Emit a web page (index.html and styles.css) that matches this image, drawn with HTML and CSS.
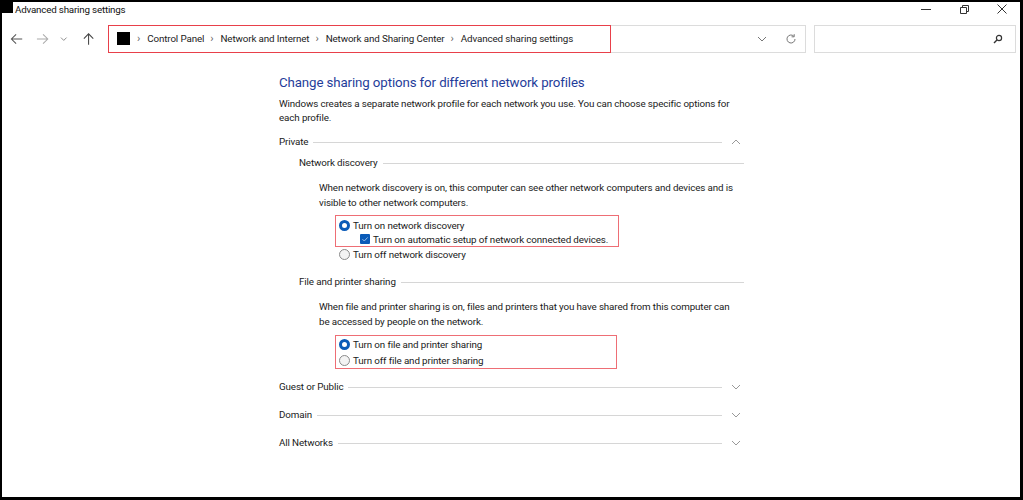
FILE: index.html
```html
<!DOCTYPE html>
<html lang="en">
<head>
<meta charset="utf-8">
<title>Advanced sharing settings</title>
<link rel="stylesheet" href="styles.css">
</head>
<body>
<div class="window">
  <header class="titlebar">
    <span class="app-icon"></span>
    <span class="title">Advanced sharing settings</span>
    <div class="controls">
      <svg class="ctl" viewBox="0 0 10 10" width="10" height="10"><path d="M0 5.5h10" stroke="#333" stroke-width="1"/></svg>
      <svg class="ctl" viewBox="0 0 10 10" width="10" height="10"><path d="M1.5 3.5h6v6h-6z M3.5 3.5v-2h6v6h-2" fill="none" stroke="#333" stroke-width="1"/></svg>
      <svg class="ctl" viewBox="0 0 10 10" width="10" height="10"><path d="M0.5 0.5l9 9M9.5 0.5l-9 9" stroke="#333" stroke-width="1"/></svg>
    </div>
  </header>

  <nav class="navbar">
    <div class="nav-buttons">
      <svg class="nav-btn" viewBox="0 0 14 14" width="14" height="14"><path d="M13 7H1.5M6.5 2L1.5 7l5 5" fill="none" stroke="#555" stroke-width="1.1"/></svg>
      <svg class="nav-btn dim" viewBox="0 0 14 14" width="14" height="14"><path d="M1 7h11.5M7.5 2l5 5-5 5" fill="none" stroke="#aaa" stroke-width="1.1"/></svg>
      <svg class="nav-drop" viewBox="0 0 8 8" width="8" height="8"><path d="M1 2.5l3 3 3-3" fill="none" stroke="#888" stroke-width="1"/></svg>
      <svg class="nav-btn" viewBox="0 0 14 14" width="14" height="14"><path d="M7 13V1.5M2 6.5l5-5 5 5" fill="none" stroke="#444" stroke-width="1.1"/></svg>
    </div>
    <div class="address">
      <div class="crumbs">
        <span class="crumb-icon"></span>
        <span class="sep">›</span><span class="crumb">Control Panel</span>
        <span class="sep">›</span><span class="crumb">Network and Internet</span>
        <span class="sep">›</span><span class="crumb">Network and Sharing Center</span>
        <span class="sep">›</span><span class="crumb">Advanced sharing settings</span>
      </div>
      <div class="address-tools">
        <svg viewBox="0 0 12 12" width="12" height="12"><path d="M2 4l4 4 4-4" fill="none" stroke="#777" stroke-width="1"/></svg>
        <svg viewBox="0 0 12 12" width="12" height="12"><path d="M10 6a4 4 0 1 1-1.3-2.95" fill="none" stroke="#777" stroke-width="1"/><path d="M9.2 1.2v2.6H6.6" fill="none" stroke="#777" stroke-width="1"/></svg>
      </div>
    </div>
    <div class="search">
      <svg viewBox="0 0 10 10" width="10" height="10"><circle cx="6" cy="4" r="2.6" fill="none" stroke="#333" stroke-width="1.2"/><path d="M4.2 5.8L1 9" stroke="#333" stroke-width="1.4"/></svg>
    </div>
  </nav>

  <main class="content">
    <h1 class="heading">Change sharing options for different network profiles</h1>
    <p class="intro">Windows creates a separate network profile for each network you use. You can choose specific options for each profile.</p>

    <section class="profile">
      <div class="profile-head">
        <span>Private</span><span class="rule"></span>
        <svg class="chev" viewBox="0 0 10 10" width="10" height="10"><path d="M1 7l4-4 4 4" fill="none" stroke="#999" stroke-width="1"/></svg>
      </div>

      <div class="group">
        <div class="group-head"><span>Network discovery</span><span class="rule"></span></div>
        <p class="group-desc">When network discovery is on, this computer can see other network computers and devices and is visible to other network computers.</p>
        <div class="options">
          <div class="highlight">
            <label class="opt"><span class="radio on"></span>Turn on network discovery</label>
            <label class="opt sub"><span class="check"><svg viewBox="0 0 10 10" width="10" height="10"><path d="M2.5 5.2l1.8 1.8 3.4-3.6" fill="none" stroke="#9cc0e8" stroke-width="1"/></svg></span>Turn on automatic setup of network connected devices.</label>
          </div>
          <label class="opt"><span class="radio"></span>Turn off network discovery</label>
        </div>
      </div>

      <div class="group">
        <div class="group-head"><span>File and printer sharing</span><span class="rule"></span></div>
        <p class="group-desc">When file and printer sharing is on, files and printers that you have shared from this computer can be accessed by people on the network.</p>
        <div class="options spaced">
          <div class="highlight loose">
            <label class="opt"><span class="radio on"></span>Turn on file and printer sharing</label>
            <label class="opt"><span class="radio"></span>Turn off file and printer sharing</label>
          </div>
        </div>
      </div>
    </section>

    <section class="profile collapsed first">
      <div class="profile-head">
        <span>Guest or Public</span><span class="rule"></span>
        <svg class="chev" viewBox="0 0 10 10" width="10" height="10"><path d="M1 3l4 4 4-4" fill="none" stroke="#999" stroke-width="1"/></svg>
      </div>
    </section>
    <section class="profile collapsed">
      <div class="profile-head">
        <span>Domain</span><span class="rule"></span>
        <svg class="chev" viewBox="0 0 10 10" width="10" height="10"><path d="M1 3l4 4 4-4" fill="none" stroke="#999" stroke-width="1"/></svg>
      </div>
    </section>
    <section class="profile collapsed">
      <div class="profile-head">
        <span>All Networks</span><span class="rule"></span>
        <svg class="chev" viewBox="0 0 10 10" width="10" height="10"><path d="M1 3l4 4 4-4" fill="none" stroke="#999" stroke-width="1"/></svg>
      </div>
    </section>
  </main>
</div>
</body>
</html>
```

FILE: styles.css
```css
* { box-sizing: border-box; }

html, body {
  margin: 0;
  padding: 0;
  background: #000;
}

body {
  font-family: Roboto, "Noto Sans", sans-serif;
  font-size: 9.8px;
  letter-spacing: -0.12px;
  color: #1a1a1a;
}

.window {
  width: 1023px;
  height: 500px;
  background: #fff;
  border-style: solid;
  border-color: #000;
  border-width: 2px 3px 3px 2px;
  display: flex;
  flex-direction: column;
  overflow: hidden;
}

/* title bar */
.titlebar {
  height: 17px;
  display: flex;
  align-items: center;
  flex: none;
}

.app-icon {
  width: 11px;
  height: 14px;
  margin-top: -3px;
  background: #000;
  align-self: flex-start;
}

.title {
  margin-left: 2px;
  font-size: 9.8px;
  letter-spacing: -0.2px;
  color: #111;
  margin-top: -3px;
}

.controls {
  margin-left: auto;
  display: flex;
  gap: 28px;
  padding-right: 13px;
  margin-top: -4px;
}

.ctl { display: block; }

/* navigation bar */
.navbar {
  height: 36px;
  display: flex;
  align-items: center;
  flex: none;
  padding-top: 3px;
}

.nav-buttons {
  display: flex;
  align-items: center;
  width: 106px;
  padding-left: 8px;
}

.nav-btn { display: block; margin-right: 13px; }
.nav-drop { display: block; margin: 0 14px 0 -2px; }

.address {
  width: 698px;
  height: 28px;
  border: 1px solid #dcdcdc;
  display: flex;
  align-items: stretch;
}

.crumbs {
  width: 503px;
  margin: -1px 0 -1px -1px;
  border: 1.5px solid #e8404a;
  display: flex;
  align-items: center;
  padding-left: 8px;
  color: #222;
  white-space: nowrap;
}

.crumb-icon {
  width: 13px;
  height: 13px;
  background: #000;
  margin-right: 7px;
}

.sep {
  color: #666;
  margin: 0 7px 0 0;
  font-size: 11px;
}

.crumb { margin-right: 6px; }

.address-tools {
  margin-left: auto;
  display: flex;
  align-items: center;
  gap: 17px;
  padding-right: 8px;
}

.address-tools svg { display: block; }

.search {
  width: 202px;
  height: 28px;
  margin-left: 8px;
  border: 1px solid #dcdcdc;
  display: flex;
  align-items: center;
  justify-content: flex-end;
  padding-right: 12px;
}

.search svg { display: block; }

/* main content */
.content {
  margin-left: 277px;
  width: 467px;
  padding-top: 19px;
}

.heading {
  margin: 0;
  font-weight: normal;
  font-size: 13.3px;
  letter-spacing: -0.12px;
  line-height: 18px;
  color: #1f3d9a;
}

.intro {
  margin: 5px 0 0;
  line-height: 14px;
}

.profile { margin-top: 10px; }
.profile.collapsed { margin-top: 14px; }
.profile.collapsed.first { margin-top: 11px; }

.profile-head,
.group-head {
  display: flex;
  align-items: center;
  height: 14px;
  line-height: 14px;
}

.rule {
  flex: 1;
  height: 1px;
  background: #d6d6d6;
  margin: 1px 9px 0 5px;
}

.chev { display: block; margin-right: 5px; }

.group { margin-left: 20px; }
.group-head { margin-top: 7px; }
.group + .group .group-head { margin-top: 14px; }
.group-head .rule { margin-right: 2px; }

.group-desc {
  margin: 10px 6px 0 20px;
  line-height: 15px;
}

.options {
  margin: 5px 0 0 40px;
}

.options.spaced { margin-top: 6px; }

.highlight {
  display: flex;
  flex-direction: column;
  width: 284px;
  border: 1px solid #ee6e75;
  padding: 2px 0 0 3px;
  margin-left: -4px;
}

.highlight.loose { padding: 0 0 0 3px; width: 282px; }
.highlight.loose .opt { height: 16px; }

.opt {
  display: flex;
  align-items: center;
  height: 14px;
  white-space: nowrap;
}

.opt.sub { padding-left: 21px; }

.radio {
  width: 11px;
  height: 11px;
  border-radius: 50%;
  border: 1px solid #8a8a8a;
  background: #f3f3f3;
  margin-right: 3px;
  flex: none;
}

.radio.on {
  border: 3.5px solid #0a5bb8;
  background: #fff;
}

.check {
  width: 10px;
  height: 10px;
  background: #0a5bb8;
  border-radius: 1px;
  margin-right: 3px;
  flex: none;
}

.check svg { display: block; }
```
